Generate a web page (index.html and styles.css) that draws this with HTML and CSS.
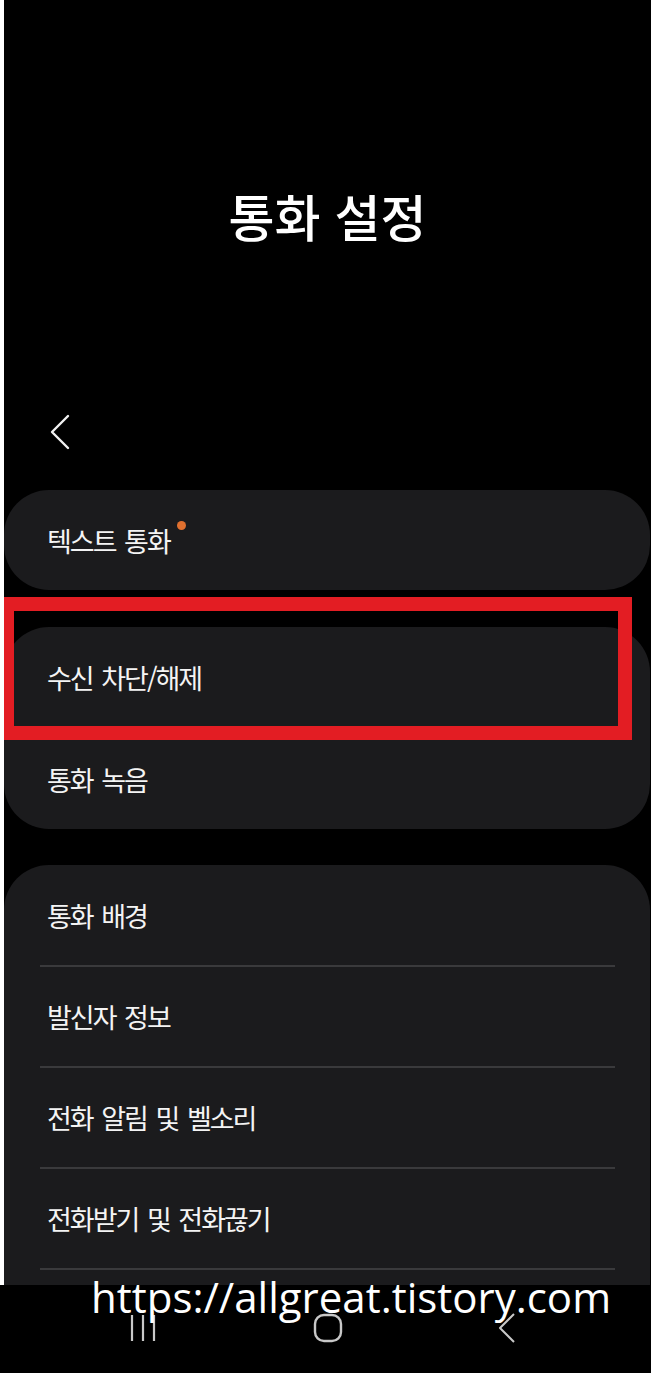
FILE: index.html
```html
<!DOCTYPE html>
<html lang="ko">
<head>
  <meta charset="UTF-8" />
  <meta name="viewport" content="width=device-width, initial-scale=1.0"/>
  <title>통화 설정</title>
  <link rel="stylesheet" href="styles.css">
</head>
<body>

  <div class="page">
    <div class="screen">
      <h1 class="title">통화 설정</h1>

      <div class="toolbar">
        <svg class="back" width="24" height="36" viewBox="0 0 24 36">
          <polyline points="19,2 3,18 19,34" fill="none" stroke="#f2f2f2" stroke-width="2.4" stroke-linecap="round" stroke-linejoin="round"/>
        </svg>
      </div>

      <div class="card">
        <div class="row">텍스트 통화<span class="dot"></span></div>
      </div>

      <div class="card marked">
        <div class="row">수신 차단/해제</div>
        <div class="row">통화 녹음</div>
        <div class="highlight"></div>
      </div>

      <div class="card">
        <div class="row">통화 배경</div>
        <div class="row">발신자 정보</div>
        <div class="row">전화 알림 및 벨소리</div>
        <div class="row">전화받기 및 전화끊기</div>
        <div class="row">&nbsp;</div>
      </div>
    </div>

    <div class="navbar">
      <svg width="28" height="28" viewBox="0 0 28 28">
        <g stroke="#c8c8c8" stroke-width="2.2">
          <line x1="3" y1="1" x2="3" y2="27"/>
          <line x1="14" y1="1" x2="14" y2="27"/>
          <line x1="25" y1="1" x2="25" y2="27"/>
        </g>
      </svg>
      <svg width="30" height="30" viewBox="0 0 30 30">
        <rect x="2" y="2" width="26" height="26" rx="9" fill="none" stroke="#c8c8c8" stroke-width="2.4"/>
      </svg>
      <svg width="18" height="30" viewBox="0 0 18 30">
        <polyline points="16,1 2,15 16,29" fill="none" stroke="#c8c8c8" stroke-width="2" stroke-linejoin="round"/>
      </svg>
    </div>

    <div class="watermark">https://allgreat.tistory.com</div>
  </div>

</body>
</html>
```

FILE: styles.css
```css
* {
  box-sizing: border-box;
}
body {
  margin: 0;
  background: #fff;
  font-family: "Noto Sans CJK KR", "Noto Sans", sans-serif;
  color: #f4f4f4;
}
.page {
  position: relative;
  width: 651px;
  height: 1373px;
  overflow: hidden;
}
.screen {
  margin-left: 4px;
  height: 1285px;
  background: #000;
  overflow: hidden;
}
.title {
  margin: 0;
  padding-top: 185px;
  height: 245px;
  line-height: 60px;
  text-align: center;
  font-size: 50px;
  font-weight: 500;
  letter-spacing: 0;
  color: #fff;
}
.toolbar {
  margin-top: 155px;
  height: 64px;
  display: flex;
  align-items: center;
  padding-left: 45px;
}
.back {
  display: block;
}
.card {
  margin-top: 26px;
  width: 646px;
  background: #1b1b1d;
  border-radius: 45px;
}
.card + .card {
  margin-top: 37px;
}
.card:last-child {
  margin-top: 36px;
}
.row {
  position: relative;
  display: flex;
  align-items: center;
  height: 100px;
  padding-left: 43px;
  font-size: 27px;
  letter-spacing: -2px;
  word-spacing: 3px;
}
.row + .row {
  margin-top: 2px;
}
.row + .row::before {
  content: "";
  position: absolute;
  left: 36px;
  right: 35px;
  top: -2px;
  height: 2px;
  background: #3a3a3c;
}
.card:last-child .row + .row {
  height: 99px;
}
.dot {
  align-self: flex-start;
  margin-top: 31px;
  margin-left: 7px;
  width: 9px;
  height: 9px;
  border-radius: 50%;
  background: #e0702f;
}
.marked {
  position: relative;
}
.highlight {
  position: absolute;
  left: -4px;
  top: -30px;
  width: 632px;
  height: 143px;
  border: 14px solid #e31d23;
}
.navbar {
  height: 88px;
  background: #000;
  display: flex;
  align-items: center;
  justify-content: space-between;
  padding: 0 135px 2px 129px;
}
.navbar svg {
  display: block;
}
.watermark {
  position: absolute;
  left: 91px;
  top: 1276px;
  font-family: "Open Sans", sans-serif;
  font-size: 42px;
  line-height: 42px;
  color: #fff;
  white-space: nowrap;
}
```
